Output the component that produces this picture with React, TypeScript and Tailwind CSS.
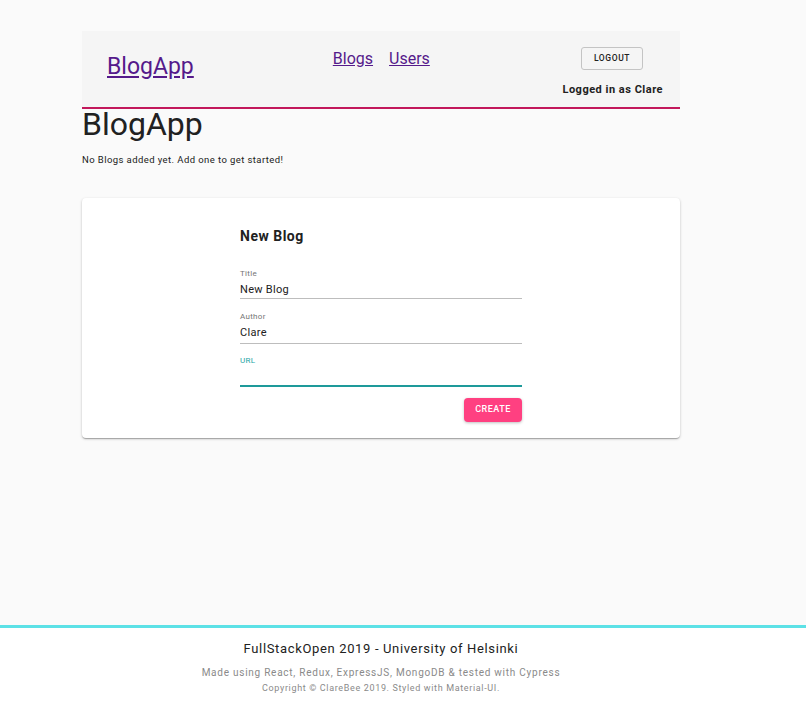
export default function App() {
  const font = { fontFamily: "Roboto, 'Liberation Sans', sans-serif" };
  return (
    <div className="flex min-h-[705px] flex-col bg-[#fafafa] text-[#212121]" style={font}>
      <main className="flex-1">
        <div className="ml-[82px] w-[598px] pt-[31px]">
          <header className="flex h-[78px] items-start border-b-2 border-[#c2185b] bg-[#f5f5f5]">
            <a href="#" className="ml-[25px] mt-[22px] text-[23px] leading-[28px] text-[#551a8b] underline">
              BlogApp
            </a>
            <nav className="ml-[139px] mt-[18px] flex gap-[16px] text-[16px] leading-[20px] text-[#551a8b]">
              <a href="#" className="underline">Blogs</a>
              <a href="#" className="underline">Users</a>
            </nav>
            <div className="ml-auto mr-[17px] mt-[16px] flex flex-col items-end">
              <button className="mr-[20px] h-[23px] w-[62px] rounded-[3px] border border-[#c4c4c4] text-[8.5px] font-medium tracking-[0.6px] text-[#212121]">
                LOGOUT
              </button>
              <div className="mt-[13px] text-[11px] font-bold leading-[13px] tracking-[0.5px]">Logged in as Clare</div>
            </div>
          </header>

          <h1 className="mt-[-5px] text-[32px] leading-[40px] font-normal">BlogApp</h1>
          <p className="mt-[10px] text-[9.5px] leading-[12px] tracking-[0.42px]">No Blogs added yet. Add one to get started!</p>

          <section className="mt-[32px] rounded-[4px] bg-white pb-[16px] pt-[29px] shadow-[0_1px_3px_rgba(0,0,0,0.2),0_1px_1px_rgba(0,0,0,0.14),0_2px_1px_-1px_rgba(0,0,0,0.12)]">
            <form className="mx-auto w-[282px]">
              <h2 className="text-[14px] font-bold leading-[18px] tracking-[0.5px]">New Blog</h2>

              <div className="mt-[24px]">
                <label className="block text-[8px] leading-[10px] tracking-[0.3px] text-[#757575]">Title</label>
                <div className="mt-[4px] border-b border-[#bdbdbd] pb-[1px] text-[11px] leading-[14px] tracking-[0.3px]">New Blog</div>
              </div>
              <div className="mt-[13px]">
                <label className="block text-[8px] leading-[10px] tracking-[0.3px] text-[#757575]">Author</label>
                <div className="mt-[4px] border-b border-[#bdbdbd] pb-[3px] text-[11px] leading-[14px] tracking-[0.3px]">Clare</div>
              </div>
              <div className="mt-[12px]">
                <label className="block text-[8px] leading-[10px] tracking-[0.3px] text-[#26a6a6]">URL</label>
                <div className="mt-[4px] h-[17px] border-b-2 border-[#1e9a9a]"></div>
              </div>

              <div className="mt-[11px] flex justify-end">
                <button
                  type="button"
                  className="h-[24px] w-[58px] rounded-[4px] bg-[#ff4081] text-[9px] font-medium tracking-[0.5px] text-white shadow-[0_1px_3px_rgba(0,0,0,0.25)]"
                >
                  CREATE
                </button>
              </div>
            </form>
          </section>
        </div>
      </main>

      <footer className="h-[80px] border-t-[3px] border-[#5ce1e6] bg-white">
        <div className="ml-[82px] w-[598px] text-center">
          <div className="mt-[13px] text-[13px] leading-[16px] tracking-[0.65px] text-[#212121]">
            FullStackOpen 2019 - University of Helsinki
          </div>
          <div className="mt-[9px] text-[10px] leading-[13px] tracking-[0.75px] text-[#8a8a8a]">
            Made using React, Redux, ExpressJS, MongoDB &amp; tested with Cypress
          </div>
          <div className="mt-[3px] text-[9px] leading-[12px] tracking-[0.65px] text-[#8a8a8a]">
            Copyright © ClareBee 2019. Styled with Material-UI.
          </div>
        </div>
      </footer>
    </div>
  );
}
